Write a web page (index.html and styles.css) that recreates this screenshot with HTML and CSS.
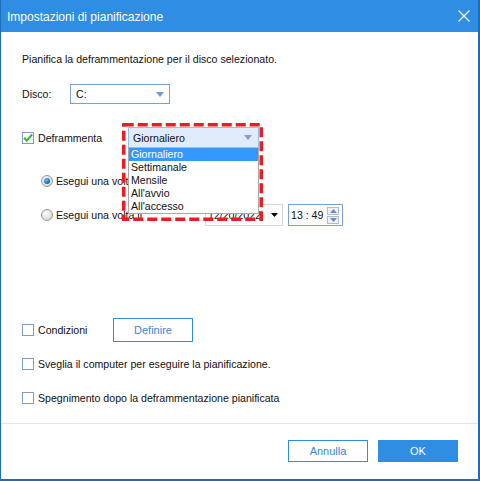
FILE: index.html
```html
<!DOCTYPE html>
<html lang="it">
<head>
<meta charset="utf-8">
<title>Impostazioni di pianificazione</title>
<link rel="stylesheet" href="styles.css">
</head>
<body>
<div class="window">
  <div class="titlebar">
    <span class="title">Impostazioni di pianificazione</span>
    <svg class="close" width="12" height="12" viewBox="0 0 12 12"><path d="M0.5 0.5 L11.5 11.5 M11.5 0.5 L0.5 11.5" stroke="#fff" stroke-width="1.1" fill="none"/></svg>
  </div>
  <div class="content">
    <p class="intro">Pianifica la deframmentazione per il disco selezionato.</p>

    <div class="row disco">
      <span class="lbl-disco">Disco:</span>
      <div class="select">
        <span>C:</span>
        <svg class="arrow" width="8" height="5" viewBox="0 0 8 5"><path d="M0 0 H8 L4 5 Z" fill="#6f9bd6"/></svg>
      </div>
    </div>

    <div class="row defrag">
      <div class="check-lbl wide">
        <span class="cb checked"><svg width="12" height="12" viewBox="0 0 12 12"><path d="M2.2 5.8 L4.8 8.6 L10.2 2.4" stroke="#2eb22e" stroke-width="2" fill="none"/></svg></span>
        <span>Deframmenta</span>
      </div>
      <div class="combo-wrap">
        <div class="combo">
          <span>Giornaliero</span>
          <svg class="arrow" width="8" height="5" viewBox="0 0 8 5"><path d="M0 0 H8 L4 5 Z" fill="#7fa0cc"/></svg>
        </div>
        <ul class="list">
          <li class="sel">Giornaliero</li>
          <li>Settimanale</li>
          <li>Mensile</li>
          <li>All'avvio</li>
          <li>All'accesso</li>
        </ul>
        <svg class="highlight" width="141" height="98" viewBox="0 0 141 98"><rect x="1.75" y="1.75" width="137.5" height="94.5" fill="none" stroke="#ec1c24" stroke-width="3.5" stroke-dasharray="10 4"/></svg>
      </div>
    </div>

    <div class="row radio-row r1">
      <span class="radio on"></span>
      <span class="r1-lbl">Esegui una volta al giorno</span>
    </div>

    <div class="row radio-row r2">
      <span class="radio"></span>
      <span class="r2-lbl">Esegui una volta il</span>
      <div class="date">
        <span>12/20/2022</span>
        <svg class="arrow" width="7" height="4" viewBox="0 0 7 4"><path d="M0 0 H7 L3.5 4 Z" fill="#000"/></svg>
      </div>
      <div class="time">
        <span>13 : 49</span>
        <div class="spin">
          <span class="sbtn"><svg width="7" height="4" viewBox="0 0 7 4"><path d="M0 4 H7 L3.5 0 Z" fill="#6d8cc2"/></svg></span>
          <span class="sbtn"><svg width="7" height="4" viewBox="0 0 7 4"><path d="M0 0 H7 L3.5 4 Z" fill="#6d8cc2"/></svg></span>
        </div>
      </div>
    </div>

    <div class="row cond">
      <div class="check-lbl cond-lbl">
        <span class="cb"></span>
        <span>Condizioni</span>
      </div>
      <button class="btn outline define">Definire</button>
    </div>

    <div class="row line wake">
      <div class="check-lbl">
        <span class="cb"></span>
        <span>Sveglia il computer per eseguire la pianificazione.</span>
      </div>
    </div>

    <div class="row line off">
      <div class="check-lbl">
        <span class="cb"></span>
        <span>Spegnimento dopo la deframmentazione pianificata</span>
      </div>
    </div>
  </div>
  <div class="footer">
    <button class="btn outline">Annulla</button>
    <button class="btn primary">OK</button>
  </div>
</div>
</body>
</html>
```

FILE: styles.css
```css
* { box-sizing: border-box; }
html, body { margin: 0; padding: 0; background: #fff; }
body {
  font-family: "Liberation Sans", Arial, sans-serif;
  font-size: 10.6px;
  color: #111;
}
.window {
  width: 480px;
  height: 481px;
  border-style: solid;
  border-color: #1b6dbd;
  border-width: 0 2px 2px 1px;
  display: flex;
  flex-direction: column;
  background: #fff;
  overflow: hidden;
}
.titlebar {
  height: 32px;
  flex: none;
  background: #2f8de4;
  display: flex;
  align-items: center;
  justify-content: space-between;
  padding: 1px 8px 0 6px;
}
.title {
  color: #fff;
  font-size: 12px;
}
.close { display: block; margin-bottom: 1px; }
.content {
  height: 391px;
  flex: none;
  padding: 19px 0 0 21px;
}
.intro {
  margin: 0;
  height: 16px;
  line-height: 16px;
}
.row {
  display: flex;
  align-items: center;
}
.disco { margin-top: 17px; height: 20px; }
.lbl-disco { width: 48px; }
.select {
  width: 100px;
  height: 20px;
  border: 1px solid #7aa0d8;
  display: flex;
  align-items: center;
  justify-content: space-between;
  padding: 0 5px 0 5px;
}
.arrow { display: block; }
.defrag { margin-top: 23px; height: 21px; }
.check-lbl {
  display: flex;
  align-items: center;
  gap: 4px;
}
.wide { width: 106px; }
.cb {
  width: 12px;
  height: 12px;
  border: 1px solid #7d9bd0;
  background: #fff;
  display: block;
  position: relative;
  flex: none;
}
.cb svg { position: absolute; left: -1px; top: -1px; }
.combo-wrap {
  position: relative;
  width: 131px;
  height: 21px;
}
.combo {
  width: 131px;
  height: 21px;
  border: 1px solid #92c0ef;
  background: #e0ecfb;
  display: flex;
  align-items: center;
  justify-content: space-between;
  padding: 0 6px 0 4px;
}
.list {
  position: absolute;
  left: 0;
  top: 21px;
  width: 131px;
  margin: 0;
  padding: 0;
  list-style: none;
  background: #fff;
  border: 1px solid #a8a8a8;
  border-top: 0;
  z-index: 2;
}
.list li {
  height: 13px;
  line-height: 13px;
  padding-left: 2px;
}
.list li.sel {
  background: #3399ff;
  color: #fff;
}
.highlight {
  position: absolute;
  left: -6px;
  top: -4px;
  z-index: 3;
}
.radio-row { padding-left: 19px; gap: 3px; }
.r1 { margin-top: 23px; height: 20px; }
.r2 { margin-top: 13px; height: 22px; }
.radio {
  width: 12px;
  height: 12px;
  border-radius: 50%;
  border: 1px solid #9a9a9a;
  background: radial-gradient(circle at 40% 35%, #fdfdfd 0%, #e2e2e2 55%, #c9c9c9 100%);
  flex: none;
  position: relative;
}
.radio.on::after {
  content: "";
  position: absolute;
  left: 2px;
  top: 2px;
  width: 6px;
  height: 6px;
  border-radius: 50%;
  background: radial-gradient(circle at 40% 35%, #6fc4f6 0%, #1a78c2 55%, #0d3f73 100%);
}
.r2-lbl { width: 149px; white-space: nowrap; }
.date {
  width: 78px;
  height: 22px;
  border: 1px solid #d7d7d7;
  display: flex;
  align-items: center;
  justify-content: space-between;
  padding: 0 4px 0 2px;
  margin-left: -3px;
}
.time {
  width: 55px;
  height: 22px;
  margin-left: 2px;
  border: 1px solid #7aa0d8;
  display: flex;
  align-items: center;
  justify-content: space-between;
  padding: 0 3px 0 2px;
}
.spin {
  display: flex;
  flex-direction: column;
  gap: 1px;
}
.sbtn {
  width: 12px;
  height: 8px;
  border: 1px solid #b0bccb;
  background: #eef2f7;
  display: flex;
  align-items: center;
  justify-content: center;
}
.sbtn svg { display: block; }
.cond { margin-top: 92px; height: 24px; }
.cond-lbl { width: 91px; }
.btn {
  font-family: inherit;
  font-size: 11px;
  width: 80px;
  height: 22px;
  padding: 0;
  margin: 0;
  cursor: default;
}
.outline {
  background: #fff;
  border: 1px solid #2f8de4;
  color: #3d86d6;
}
.define { height: 24px; }
.primary {
  background: #2f8de4;
  border: 1px solid #2f8de4;
  color: #fff;
}
.line { height: 16px; }
.wake { margin-top: 14px; }
.off { margin-top: 18px; }
.footer {
  flex: 1;
  border-top: 1px solid #e5e5e5;
  display: flex;
  justify-content: flex-end;
  align-items: flex-start;
  gap: 10px;
  padding: 16px 20px 0 0;
}
```
